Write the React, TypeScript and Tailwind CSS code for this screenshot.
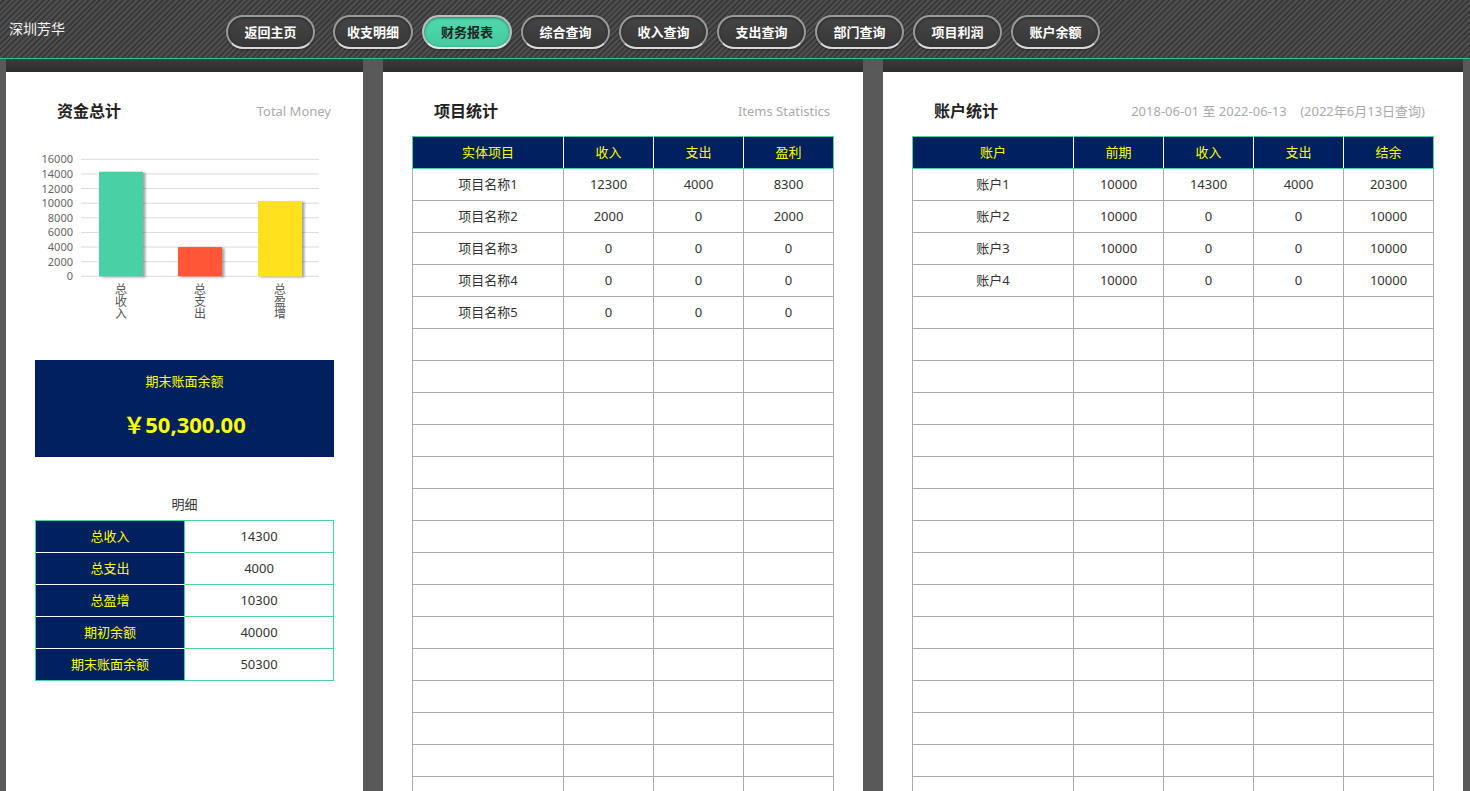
import React from "react";

const navItems = [
  { label: "返回主页", w: "w-[89px]" },
  { label: "收支明细", w: "w-[80px] ml-[9px]" },
  { label: "财务报表", w: "w-[90px]", active: true },
  { label: "综合查询", w: "w-[89px]" },
  { label: "收入查询", w: "w-[89px]" },
  { label: "支出查询", w: "w-[89px]" },
  { label: "部门查询", w: "w-[89px]" },
  { label: "项目利润", w: "w-[89px]" },
  { label: "账户余额", w: "w-[89px]" },
];

const details = [
  { name: "总收入", value: 14300 },
  { name: "总支出", value: 4000 },
  { name: "总盈增", value: 10300 },
  { name: "期初余额", value: 40000 },
  { name: "期末账面余额", value: 50300 },
];

const projects = [
  ["项目名称1", "12300", "4000", "8300"],
  ["项目名称2", "2000", "0", "2000"],
  ["项目名称3", "0", "0", "0"],
  ["项目名称4", "0", "0", "0"],
  ["项目名称5", "0", "0", "0"],
];

const accounts = [
  ["账户1", "10000", "14300", "4000", "20300"],
  ["账户2", "10000", "0", "0", "10000"],
  ["账户3", "10000", "0", "0", "10000"],
  ["账户4", "10000", "0", "0", "10000"],
];

const bars = [
  { label: "总收入", value: 14300, color: "#48d1a5", x: 64, gap: "ml-[64px]" },
  { label: "总支出", value: 4000, color: "#ff5737", x: 143, gap: "ml-[35px]" },
  { label: "总盈增", value: 10300, color: "#ffe11a", x: 223, gap: "ml-[36px]" },
];

function PanelTitle({ title, sub, subPad = "pr-[3px]" }: { title: string; sub: string; subPad?: string }) {
  return (
    <div className={`flex h-[20px] items-center justify-between pl-[22px] ${subPad}`}>
      <span className="text-[16px] font-bold leading-[20px] text-[#222]">{title}</span>
      <span className="whitespace-pre text-[13px] leading-[20px] text-[#aaa]">{sub}</span>
    </div>
  );
}

function MoneyChart() {
  const top = 9.3;
  const bottom = 126.3;
  const ticks = [16000, 14000, 12000, 10000, 8000, 6000, 4000, 2000, 0];
  const y = (v: number) => bottom - (v / 16000) * (bottom - top);
  return (
    <div>
      <svg width="299" height="134" viewBox="0 0 299 134" className="block">
        <defs>
          <filter id="barShadow" x="-20%" y="-10%" width="150%" height="130%">
            <feDropShadow dx="2.5" dy="1" stdDeviation="1.2" floodColor="#000" floodOpacity="0.35" />
          </filter>
        </defs>
        {ticks.map((t) => (
          <g key={t}>
            <line x1="46" x2="284" y1={y(t)} y2={y(t)} stroke="#dcdcdc" strokeWidth="1" />
            <text x="38" y={y(t) + 4} textAnchor="end" fontSize="11" fill="#666" fontFamily="'Noto Sans', sans-serif">
              {t}
            </text>
          </g>
        ))}
        {bars.map((b) => (
          <rect
            key={b.label}
            x={b.x}
            y={y(b.value)}
            width="44"
            height={bottom - y(b.value)}
            fill={b.color}
            filter="url(#barShadow)"
          />
        ))}
      </svg>
      <div className="flex">
        {bars.map((b) => (
          <div key={b.label} className={`w-[44px] ${b.gap}`}>
            <div className="mx-auto w-[12px] break-all text-[12px] leading-[12px] text-[#555]">{b.label}</div>
          </div>
        ))}
      </div>
    </div>
  );
}

function DataTable({ head, rows, total }: { head: string[]; rows: string[][]; total: number }) {
  const filled = [...rows, ...Array.from({ length: total - rows.length }, () => head.map(() => ""))];
  return (
    <table className="w-full table-fixed border-collapse">
      <colgroup>
        <col />
        {head.slice(1).map((h) => (
          <col key={h} className="w-[90px]" />
        ))}
      </colgroup>
      <thead>
        <tr>
          {head.map((h, i) => (
            <th
              key={h}
              className={`h-[32px] border-y border-x border-y-[#48d1a5] border-x-white bg-[#00205f] text-[13px] font-normal text-[#ffff00] ${
                i === 0 ? "border-l-[#48d1a5]" : ""
              } ${i === head.length - 1 ? "border-r-[#48d1a5]" : ""}`}
            >
              {h}
            </th>
          ))}
        </tr>
      </thead>
      <tbody>
        {filled.map((r, ri) => (
          <tr key={ri} className="h-[32px]">
            {r.map((c, ci) => (
              <td key={ci} className="border border-[#aaa] text-center text-[13px] text-[#333]">
                {c}
              </td>
            ))}
          </tr>
        ))}
      </tbody>
    </table>
  );
}

function Panel({ width, children }: { width: string; children: React.ReactNode }) {
  return (
    <section className={`flex h-full shrink-0 flex-col ${width}`}>
      <div className="h-[13px] shrink-0 bg-gradient-to-b from-[#3c3c3c] to-[#2c2c2c]" />
      <div className="min-h-0 flex-1 overflow-hidden bg-white px-[29px] pt-[29px]">{children}</div>
    </section>
  );
}

export default function App() {
  return (
    <div className="h-screen overflow-hidden bg-[#595959] font-['Noto_Sans','Noto_Sans_CJK_SC',sans-serif]">
      <header className="flex h-[59px] items-center border-b border-[#2fc28f] bg-[repeating-linear-gradient(135deg,#4e4e4e_0px,#4e4e4e_2px,#3a3a3a_2px,#3a3a3a_4px)] pl-[9px]">
        <div className="w-[217px] text-[14px] leading-[20px] text-[#f2f2f2]">深圳芳华</div>
        <nav className="mt-[6px] flex items-center gap-[9px]">
          {navItems.map((n) => (
            <button
              key={n.label}
              className={`h-[34px] rounded-full border-2 text-[13px] font-bold leading-none shadow-[inset_0_1px_3px_rgba(0,0,0,0.45),0_1px_2px_rgba(0,0,0,0.4)] ${n.w} ${
                n.active
                  ? "border-[#bdbdbd] border-b-[#e6e6e6] bg-gradient-to-b from-[#52d8ad] to-[#42c99d] text-[#222]"
                  : "border-[#9a9a9a] border-b-[#d9d9d9] bg-gradient-to-b from-[#454545] to-[#373737] text-white"
              }`}
            >
              {n.label}
            </button>
          ))}
        </nav>
      </header>

      <main className="flex h-[732px] gap-5 pl-[6px]">
        <Panel width="w-[357px]">
          <PanelTitle title="资金总计" sub="Total Money" />
          <div className="mt-[29px]">
            <MoneyChart />
          </div>
          <div className="mt-[40px] flex h-[97px] flex-col items-center bg-[#00205f] pt-[13px] text-[#ffff00]">
            <div className="text-[13px] leading-[16px]">期末账面余额</div>
            <div className="mt-[20px] text-[22px] font-bold leading-[30px]">￥50,300.00</div>
          </div>
          <div className="mt-[39px] text-center text-[13px] leading-[16px] text-[#333]">明细</div>
          <div className="mt-[8px] border border-[#48d1a5]">
            {details.map((d, i) => (
              <div key={d.name} className="flex">
                <div
                  className={`flex w-[149px] items-center justify-center border-r border-[#48d1a5] bg-[#00205f] text-[13px] text-[#ffff00] ${
                    i > 0 ? "h-[32px] border-t border-t-white" : "h-[31px]"
                  }`}
                >
                  {d.name}
                </div>
                <div
                  className={`flex flex-1 items-center justify-center text-[13px] text-[#333] ${
                    i > 0 ? "h-[32px] border-t border-[#48d1a5]" : "h-[31px]"
                  }`}
                >
                  {d.value}
                </div>
              </div>
            ))}
          </div>
        </Panel>

        <Panel width="w-[480px]">
          <PanelTitle title="项目统计" sub="Items Statistics" subPad="pr-[4px]" />
          <div className="mt-[15px]">
            <DataTable head={["实体项目", "收入", "支出", "盈利"]} rows={projects} total={20} />
          </div>
        </Panel>

        <Panel width="w-[580px]">
          <PanelTitle title="账户统计" sub="2018-06-01 至 2022-06-13    (2022年6月13日查询)" subPad="pr-[9px]" />
          <div className="mt-[15px]">
            <DataTable head={["账户", "前期", "收入", "支出", "结余"]} rows={accounts} total={20} />
          </div>
        </Panel>
      </main>
    </div>
  );
}
